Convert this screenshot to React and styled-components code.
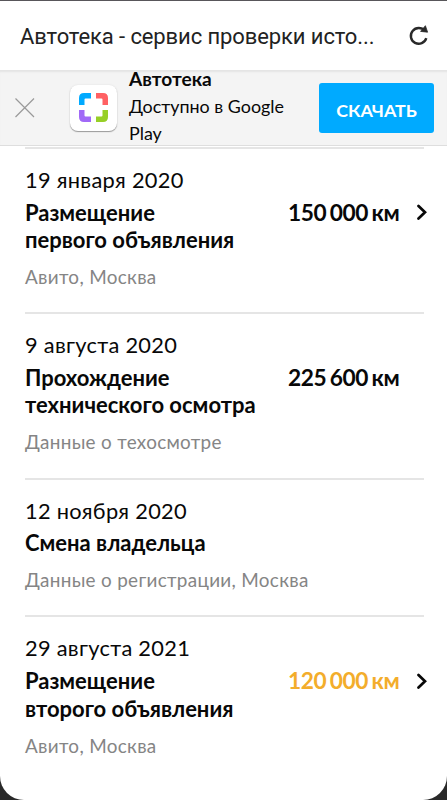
import React from "react";
import styled, { createGlobalStyle } from "styled-components";

const GlobalStyle = createGlobalStyle`
  * { box-sizing: border-box; }
  body { margin: 0; background: #292929; overflow: hidden; font-family: Lato, sans-serif; color: #080808; }
`;

const Screen = styled.div`
  width: 447px;
  height: 800px;
  background: #fff;
  border-top: 1px solid #58565a;
  border-radius: 0 0 24px 24px;
  overflow: hidden;
  display: flex;
  flex-direction: column;
`;

const TitleBar = styled.header`
  height: 69px;
  flex: none;
  display: flex;
  align-items: center;
  justify-content: space-between;
  padding: 0 17px 0 20px;
`;

const PageTitle = styled.div`
  font: 400 22px/30px Roboto, sans-serif;
  letter-spacing: -0.1px;
  color: #222;
  white-space: nowrap;
  padding-top: 2px;
`;

const Banner = styled.section`
  height: 76px;
  flex: none;
  display: flex;
  align-items: center;
  background: #f4f4f4;
  box-shadow: inset 0 3px 2px -1px #e4e4e4;
  border-bottom: 1px solid #dedede;
  padding: 0 13px 0 14px;
`;

const AppIcon = styled.div`
  width: 47px;
  height: 46px;
  margin: 0 12px 0 35px;
  flex: none;
  display: flex;
  align-items: center;
  justify-content: center;
  background: #fff;
  border-radius: 8px;
  box-shadow: 0 1px 1px #999, 0 0 2px #ddd;
`;

const BannerText = styled.div`
  width: 190px;
  flex: none;
  margin-top: -2px;
  font-size: 17.9px;
  line-height: 27.5px;
`;

const AppName = styled.div`
  font-size: 19.1px;
  font-weight: 700;
`;

const Download = styled.button`
  width: 115px;
  height: 50px;
  flex: none;
  border: 0;
  border-radius: 3px;
  padding: 5px 0 0;
  background: #00aaff;
  color: #fff;
  font: 700 17.9px/24px Lato, sans-serif;
`;

const History = styled.main`
  padding: 1px 23px 0 25px;
`;

const Entry = styled.article`
  border-top: 2px solid #e5e5e5;
  padding: 17px 0 20px;
  height: ${(p) => p.$height}px;
`;

const DateLine = styled.div`
  font-size: 21.8px;
  line-height: 28px;
  letter-spacing: 0.29px;
`;

const EventRow = styled.div`
  display: flex;
  justify-content: space-between;
  margin-top: 4.7px;
`;

const EventTitle = styled.h2`
  margin: 0;
  font-size: 22px;
  font-weight: 700;
  line-height: 27.5px;
  white-space: pre-line;
`;

const Mileage = styled.div`
  display: flex;
  height: 27px;
  align-items: center;
  font-size: 22.7px;
  font-weight: 700;
  white-space: nowrap;
  color: ${(p) => (p.$warning ? "#f3ad2b" : "inherit")};
`;

const Distance = styled.span`
  width: 111px;
  display: flex;
  gap: 3.5px;
  letter-spacing: -0.4px;
`;

const ArrowSlot = styled.span`
  width: 25px;
  padding-left: 16px;
  display: flex;
  align-items: center;
  color: #080808;
`;

const Source = styled.div`
  margin-top: 9.5px;
  font-size: 18.9px;
  line-height: 28px;
  letter-spacing: 0.31px;
  color: #858585;
`;

const entries = [
  { date: "19 января 2020", title: "Размещение\nпервого объявления", km: ["150", "000"], arrow: true, source: "Авито, Москва", height: 165.3 },
  { date: "9 августа 2020", title: "Прохождение\nтехнического осмотра", km: ["225", "600"], source: "Данные о техосмотре", height: 165.3 },
  { date: "12 ноября 2020", title: "Смена владельца", source: "Данные о регистрации, Москва", height: 137.8 },
  { date: "29 августа 2021", title: "Размещение\nвторого объявления", km: ["120", "000"], arrow: true, warning: true, source: "Авито, Москва", height: 165 },
];

const Reload = () => (
  <svg width="22" height="22" viewBox="0 0 22 22" fill="none">
    <path d="M16.8 5.8A7.9 7.9 0 1 0 18.3 13.2" stroke="#292929" strokeWidth="2.4" />
    <path d="M17.4 0.7 19.6 7.2 12.6 6.4Z" fill="#292929" stroke="#292929" strokeWidth="0.8" strokeLinejoin="round" />
  </svg>
);

const Close = () => (
  <svg width="21" height="21" viewBox="0 0 21 21" fill="none">
    <path d="m1.5 1.5 18.5 18.5M20 1.5 1.5 20" stroke="#999" strokeWidth="1.2" />
  </svg>
);

const Logo = () => (
  <svg width="29" height="29" viewBox="0 0 29 29">
    <path d="M5 0H12V5.5H6.5Q5.5 5.5 5.5 6.5V12H0V5Q0 0 5 0Z" fill="#00aaff" />
    <path d="M17 0H24Q29 0 29 5V12H23.5V6.5Q23.5 5.5 22.5 5.5H17Z" fill="#ff6163" />
    <path d="M0 17H5.5V22.5Q5.5 23.5 6.5 23.5H12V29H5Q0 29 0 24Z" fill="#a169f7" />
    <path d="M23.5 17H29V24Q29 29 24 29H17V23.5H22.5Q23.5 23.5 23.5 22.5Z" fill="#97cf26" />
  </svg>
);

const ChevronIcon = styled.svg`
  flex: none;
  width: 13px;
  height: 16px;
`;

const Chevron = () => (
  <ChevronIcon viewBox="0 0 13 16" fill="none">
    <path d="m3.5 2 6.5 6.3-6.5 6.2" stroke="currentColor" strokeWidth="2.7" strokeLinecap="round" />
  </ChevronIcon>
);

export default function App() {
  return (
    <>
      <GlobalStyle />
      <Screen>
        <TitleBar>
          <PageTitle>Автотека - сервис проверки исто...</PageTitle>
          <Reload />
        </TitleBar>
        <Banner>
          <Close />
          <AppIcon><Logo /></AppIcon>
          <BannerText>
            <AppName>Автотека</AppName>
            Доступно в Google<br />Play
          </BannerText>
          <Download>СКАЧАТЬ</Download>
        </Banner>
        <History>
          {entries.map((e) => (
            <Entry key={e.date} $height={e.height}>
              <DateLine>{e.date}</DateLine>
              <EventRow>
                <EventTitle>{e.title}</EventTitle>
                {e.km && (
                  <Mileage $warning={e.warning}>
                    <Distance>
                      <span>{e.km[0]}</span><span>{e.km[1]}</span><span>км</span>
                    </Distance>
                    <ArrowSlot>{e.arrow && <Chevron />}</ArrowSlot>
                  </Mileage>
                )}
              </EventRow>
              <Source>{e.source}</Source>
            </Entry>
          ))}
        </History>
      </Screen>
    </>
  );
}
